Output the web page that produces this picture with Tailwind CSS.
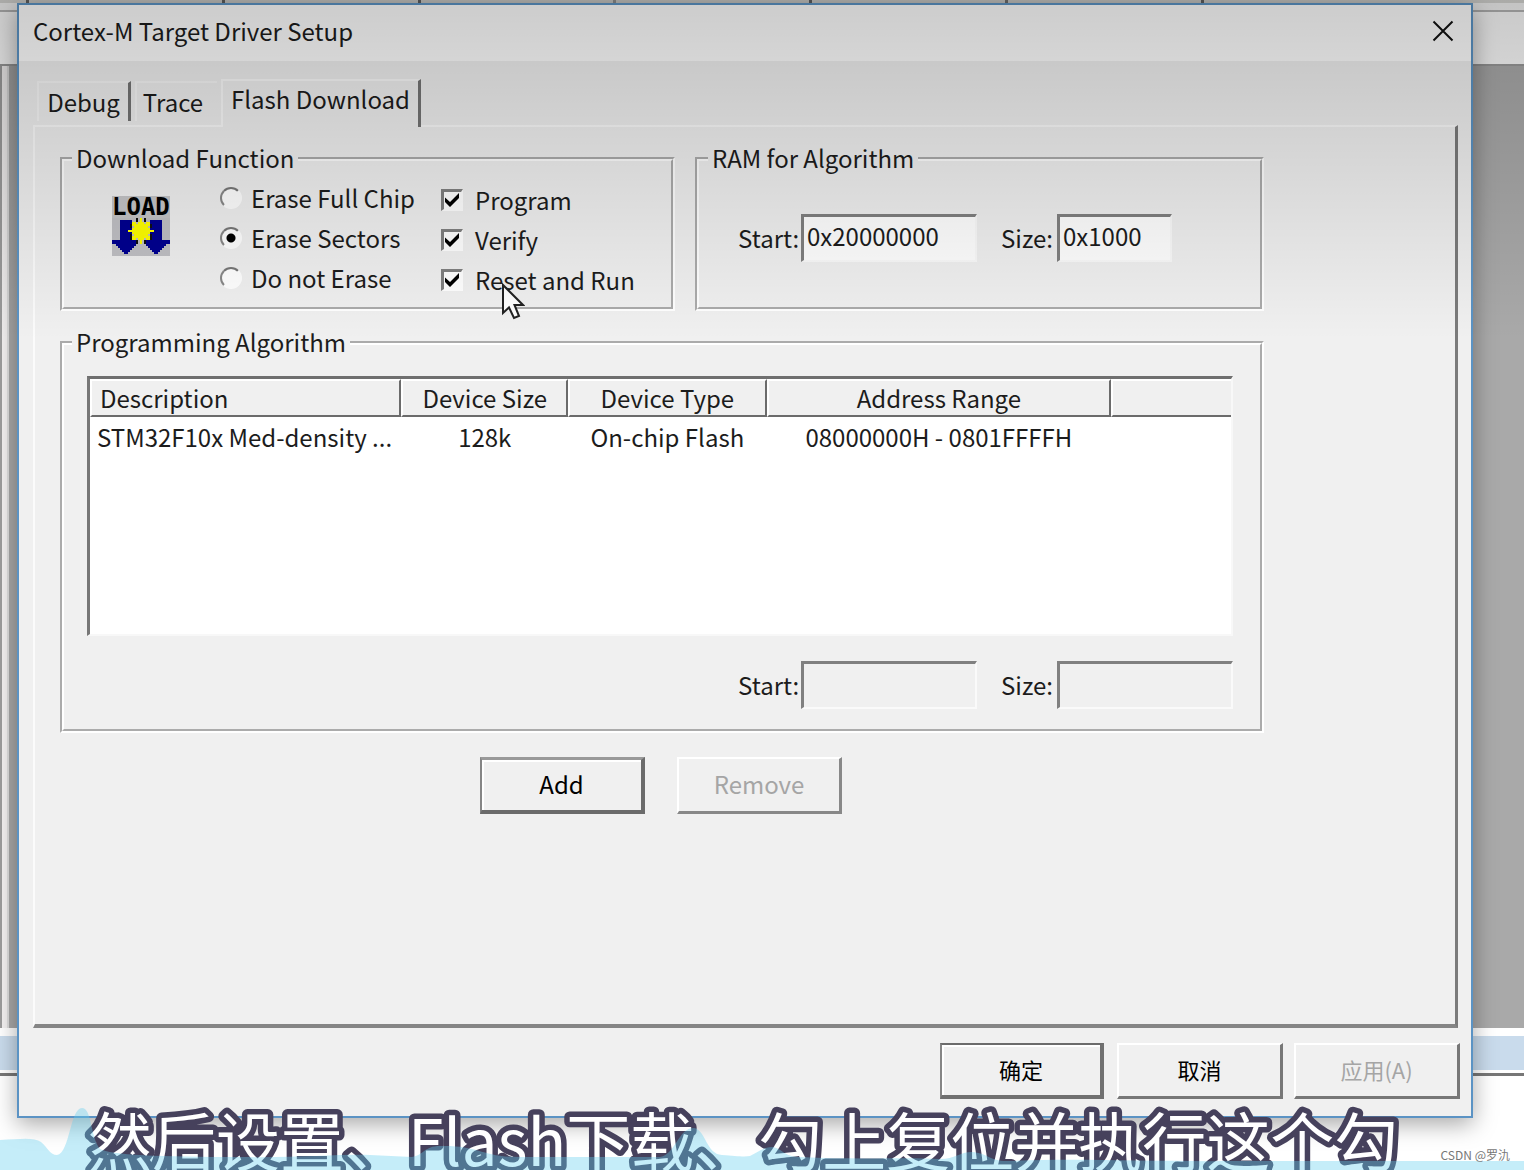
<!DOCTYPE html>
<html lang="zh-CN">
<head>
<meta charset="utf-8">
<meta name="viewport" content="width=device-width, initial-scale=1">
<title>Cortex-M Target Driver Setup</title>
<script src="https://cdn.jsdelivr.net/npm/@tailwindcss/browser@4"></script>
</head>
<body class="relative min-h-screen overflow-hidden bg-white pt-[3px] pr-[51px] pb-[52px] pl-[17px] font-['Noto_Sans_CJK_SC',sans-serif] text-2xl leading-8 text-[#1c1c1c]">

  <!-- Application window behind the dialog -->
  <div class="absolute inset-0 flex flex-col" aria-hidden="true">
    <div class="h-3 border-b-2 border-[#b5b5b5] bg-[#f4f4f4]"></div>
    <div class="h-[52px] bg-[#fbfbfb]"></div>
    <div class="flex flex-1 border-t-2 border-[#999] bg-[#a9a9a9]">
      <div class="w-[9px] border-x-2 border-l-[#9c9c9c] border-r-[#ddd] bg-[#f3f1f1]"></div>
    </div>
    <div class="h-2 bg-white"></div>
    <div class="h-[34px] bg-[#c9dbec]"></div>
    <div class="h-[3px] bg-white"></div>
    <div class="h-[3px] bg-[#777]"></div>
    <div class="h-[94px] bg-white"></div>
  </div>
  <div class="absolute inset-x-0 top-0 flex h-[3px] justify-between bg-[#d5d5d2] pr-80 pl-[26px]" aria-hidden="true">
    <span class="w-[3px] bg-[#666]"></span><span class="w-[3px] bg-[#666]"></span><span class="w-[3px] bg-[#666]"></span><span class="w-[3px] bg-[#999]"></span><span class="w-[3px] bg-[#666]"></span><span class="w-[3px] bg-[#777]"></span><span class="w-[3px] bg-[#666]"></span>
  </div>

  <main class="relative flex min-h-[calc(100vh-55px)] flex-col border-2 border-[#5b93c4] bg-[#f0f0f0] shadow-[0_6px_22px_rgba(0,0,0,0.35)]">
    <header class="flex h-14 items-center justify-between bg-white pr-[17px] pb-1 pl-[14px]">
      <h1>Cortex-M Target Driver Setup</h1>
      <button type="button" aria-label="Close">
        <svg class="size-[22px]" viewBox="0 0 22 22" fill="none" stroke="#111" stroke-width="2"><path d="M1.5 1.5 20.5 20.5M20.5 1.5 1.5 20.5"/></svg>
      </button>
    </header>

    <div class="flex flex-1 flex-col pt-[18px] pr-[13px] pb-[17px] pl-[14px]">
      <div class="flex items-end pl-1" role="tablist">
        <button type="button" role="tab" class="mr-1 mb-1 h-10 w-[94px] border-t-2 border-r-3 border-l-2 border-t-[#f8f8f8] border-r-[#747474] border-l-[#f8f8f8]">Debug</button>
        <button type="button" role="tab" class="mr-1 mb-1 h-10 w-[82px] border-t-2 border-l-2 border-[#f8f8f8] pr-2">Trace</button>
        <button type="button" role="tab" aria-selected="true" class="relative z-10 -mb-0.5 h-12 w-[200px] border-t-2 border-r-3 border-l-2 border-t-[#fbfbfb] border-r-[#747474] border-l-[#fbfbfb] bg-[#f0f0f0] pb-2.5">Flash Download</button>
      </div>

      <section role="tabpanel" class="flex flex-1 flex-col border-t-2 border-r-3 border-b-4 border-l-2 border-t-[#fbfbfb] border-r-[#7b7b7b] border-b-[#858585] border-l-[#fbfbfb] pt-4 pl-[25px]">
        <div class="grid w-full max-w-[1204px] grid-cols-[615fr_569fr] gap-x-5 gap-y-4">

          <fieldset class="h-[168px] min-w-0 border-4 border-white [border-style:groove]">
            <legend class="ml-2 px-1 pb-0.5 leading-[30px]">Download Function</legend>
            <div class="flex pt-[3px] pl-12">
              <div class="mt-[18px] w-[58px]">
                <div class="bg-[#c4c4c6] font-['DejaVu_Sans_Mono',monospace] text-2xl leading-[22px] font-bold text-black">LOAD</div>
                <svg class="h-[38px] w-[58px] bg-[#c0c0c4]" viewBox="0 0 29 19" shape-rendering="crispEdges" aria-hidden="true">
                  <path fill="#000090" d="M4 1h6v10h3v2h-1v1h-1v1h-1v1h-1v1H8v1H6v-1H5v-1H4v-1H3v-1H2v-1H0v-2h4zM19 1h6v10h4v2h-2v1h-1v1h-1v1h-1v1h-1v1h-2v-1h-1v-1h-1v-1h-1v-1h-1v-1h-1v-2h3z"/>
                  <path fill="#111" d="M9 3h1v2H9zM19 3h1v2h-1zM12 0h1v2h-1zM16 0h1v2h-1zM9 8h1v3H9zM19 8h1v3h-1zM12 11h1v2h-1zM16 11h1v2h-1z"/>
                  <path fill="#ff0" d="M14 0h1v2h1v1h1V2h2v2h-1v1h1v1h2v1h-2v1h-1v1h1v2h-2v-1h-1v1h-1v2h-1v-2h-1v-1h-1v1h-2V9h1V8h-1V7H8V6h2V5h1V4h-1V2h2v1h1V2h1z"/>
                </svg>
              </div>
              <div class="ml-[50px] w-[221px]">
                <label class="flex h-10 items-center gap-[9px]"><input type="radio" name="erase" class="size-[22px] appearance-none rounded-full border-2 border-t-[#777] border-r-white border-b-white border-l-[#888] bg-white checked:bg-[radial-gradient(circle,#000_4px,#fff_5px)]">Erase Full Chip</label>
                <label class="flex h-10 items-center gap-[9px]"><input type="radio" name="erase" checked class="size-[22px] appearance-none rounded-full border-2 border-t-[#777] border-r-white border-b-white border-l-[#888] bg-white checked:bg-[radial-gradient(circle,#000_4px,#fff_5px)]">Erase Sectors</label>
                <label class="flex h-10 items-center gap-[9px]"><input type="radio" name="erase" class="size-[22px] appearance-none rounded-full border-2 border-t-[#777] border-r-white border-b-white border-l-[#888] bg-white checked:bg-[radial-gradient(circle,#000_4px,#fff_5px)]">Do not Erase</label>
              </div>
              <div class="pt-0.5">
                <label class="flex h-10 items-center gap-3"><span class="grid place-items-center"><input type="checkbox" checked class="peer size-[22px] appearance-none border-t-3 border-r-2 border-b-2 border-l-3 border-t-[#808080] border-r-white border-b-white border-l-[#808080] bg-white [grid-area:1/1]"><svg class="invisible size-[14px] peer-checked:visible [grid-area:1/1]" viewBox="0 0 14 14"><path d="M0 4.500 5 9 14 0V5L5 14 0 9z"/></svg></span>Program</label>
                <label class="flex h-10 items-center gap-3"><span class="grid place-items-center"><input type="checkbox" checked class="peer size-[22px] appearance-none border-t-3 border-r-2 border-b-2 border-l-3 border-t-[#808080] border-r-white border-b-white border-l-[#808080] bg-white [grid-area:1/1]"><svg class="invisible size-[14px] peer-checked:visible [grid-area:1/1]" viewBox="0 0 14 14"><path d="M0 4.500 5 9 14 0V5L5 14 0 9z"/></svg></span>Verify</label>
                <label class="relative flex h-10 items-center gap-3"><span class="grid place-items-center"><input type="checkbox" checked class="peer size-[22px] appearance-none border-t-3 border-r-2 border-b-2 border-l-3 border-t-[#808080] border-r-white border-b-white border-l-[#808080] bg-white [grid-area:1/1]"><svg class="invisible size-[14px] peer-checked:visible [grid-area:1/1]" viewBox="0 0 14 14"><path d="M0 4.500 5 9 14 0V5L5 14 0 9z"/></svg></span>Reset and Run
                  <svg class="absolute top-[22px] left-[60px] h-[38px] w-6" viewBox="0 0 24 38" fill="#fff" stroke="#222" stroke-width="2" aria-hidden="true"><path d="M2 3V31L8 25.500 13 36 18 34 13.500 23H22z"/></svg>
                </label>
              </div>
            </div>
          </fieldset>

          <fieldset class="h-[168px] min-w-0 border-4 border-white [border-style:groove]">
            <legend class="ml-[9px] px-1 pb-0.5 leading-[30px]">RAM for Algorithm</legend>
            <div class="flex items-center pt-[39px] pl-[39px]">
              <label for="ram-start" class="w-[63px]">Start:</label>
              <input id="ram-start" value="0x20000000" class="h-12 w-[176px] border-t-3 border-r-2 border-b-2 border-l-3 border-t-[#808080] border-r-[#fafafa] border-b-[#fafafa] border-l-[#808080] bg-white pb-1.5 pl-[3px]">
              <label for="ram-size" class="ml-6 w-14">Size:</label>
              <input id="ram-size" value="0x1000" class="h-12 w-[115px] border-t-3 border-r-2 border-b-2 border-l-3 border-t-[#808080] border-r-[#fafafa] border-b-[#fafafa] border-l-[#808080] bg-white pb-1.5 pl-[3px]">
            </div>
          </fieldset>

          <fieldset class="col-span-2 min-w-0 border-4 border-white pr-[27px] pb-5 pl-[23px] [border-style:groove]">
            <legend class="-ml-[15px] px-1 pb-0.5 leading-[30px]">Programming Algorithm</legend>
            <div class="mt-[17px] h-[260px] border-t-3 border-r-2 border-b-2 border-l-3 border-t-[#6f6f6f] border-r-[#f8f8f8] border-b-[#f8f8f8] border-l-[#777] bg-white">
              <table class="w-full table-fixed border-separate border-spacing-0">
                <colgroup><col class="w-[27.3%]"><col class="w-[14.6%]"><col class="w-[17.4%]"><col class="w-[30.2%]"><col></colgroup>
                <thead>
                  <tr class="h-[38px] bg-[#f0f0f0]">
                    <th class="border-t-2 border-r-2 border-b-2 border-l-2 border-t-white border-r-[#6b6b6b] border-b-[#6b6b6b] border-l-white p-0 pl-2 text-left font-normal">Description</th>
                    <th class="border-t-2 border-r-2 border-b-2 border-l-2 border-t-white border-r-[#6b6b6b] border-b-[#6b6b6b] border-l-white p-0 font-normal">Device Size</th>
                    <th class="border-t-2 border-r-2 border-b-2 border-l-2 border-t-white border-r-[#6b6b6b] border-b-[#6b6b6b] border-l-white p-0 font-normal">Device Type</th>
                    <th class="border-t-2 border-r-2 border-b-2 border-l-2 border-t-white border-r-[#6b6b6b] border-b-[#6b6b6b] border-l-white p-0 font-normal">Address Range</th>
                    <th class="border-t-2 border-b-2 border-l-2 border-t-white border-b-[#6b6b6b] border-l-white p-0"></th>
                  </tr>
                </thead>
                <tbody>
                  <tr class="h-10 text-center whitespace-nowrap">
                    <td class="p-0 pl-[7px] text-left">STM32F10x Med-density ...</td>
                    <td class="p-0">128k</td>
                    <td class="p-0">On-chip Flash</td>
                    <td class="p-0">08000000H - 0801FFFFH</td>
                    <td class="p-0"></td>
                  </tr>
                </tbody>
              </table>
            </div>
            <div class="mt-[25px] flex items-center justify-end">
              <label for="alg-start" class="w-[63px]">Start:</label>
              <input id="alg-start" readonly class="h-12 w-[176px] border-t-3 border-r-2 border-b-2 border-l-3 border-t-[#808080] border-r-[#fafafa] border-b-[#fafafa] border-l-[#808080] pl-[3px]">
              <label for="alg-size" class="ml-6 w-14">Size:</label>
              <input id="alg-size" readonly class="h-12 w-[176px] border-t-3 border-r-2 border-b-2 border-l-3 border-t-[#808080] border-r-[#fafafa] border-b-[#fafafa] border-l-[#808080] pl-[3px]">
            </div>
          </fieldset>

          <div class="col-span-2 flex justify-center gap-8 pt-2 pr-0.5">
            <button type="button" class="h-[57px] w-[165px] border-t-3 border-r-4 border-b-4 border-l-2 border-t-[#999] border-r-[#6b6b6b] border-b-[#6b6b6b] border-l-[#858585] pb-0.5 text-black shadow-[inset_2px_2px_0_#fff]">Add</button>
            <button type="button" disabled class="h-[57px] w-[165px] border-t-2 border-r-3 border-b-3 border-l-2 border-t-white border-r-[#888] border-b-[#888] border-l-white pb-0.5 text-[#a5a5a5]">Remove</button>
          </div>
        </div>
      </section>

      <footer class="mt-[15px] flex justify-end">
        <button type="button" class="h-14 w-[164px] border-t-2 border-r-4 border-b-4 border-l-2 border-t-[#6b6b6b] border-r-[#707070] border-b-[#707070] border-l-[#858585] pb-0.5 text-[22px] text-black shadow-[inset_2px_2px_0_#fff]">确定</button>
        <button type="button" class="ml-[13px] h-14 w-[166px] border-t-2 border-r-3 border-b-3 border-l-2 border-t-white border-r-[#777] border-b-[#777] border-l-white pb-1 text-[22px] text-black">取消</button>
        <button type="button" disabled class="-mr-0.5 ml-[11px] h-14 w-[166px] border-t-2 border-r-3 border-b-3 border-l-2 border-t-white border-r-[#777] border-b-[#777] border-l-white pb-1 text-[22px] text-[#a5a5a5]">应用(A)</button>
      </footer>
    </div>
  </main>

  <!-- Shade falling from the top edge of the video frame -->
  <div class="pointer-events-none absolute inset-x-0 top-0 z-20 h-[340px] bg-linear-to-b from-black/20 to-black/0"></div>

  <!-- Subtitle, progress wave and watermark -->
  <svg class="pointer-events-none absolute inset-x-0 bottom-0 z-20 h-[72px] w-full overflow-visible">
    <text x="88" y="68" font-size="64" fill="#fff" stroke="#46415c" stroke-width="11" stroke-linejoin="round" paint-order="stroke">然后设置、Flash下载、勾上复位并执行这个勾</text>
  </svg>
  <svg class="pointer-events-none absolute inset-x-0 bottom-0 z-20 h-[70px] w-full" viewBox="0 0 1524 70" preserveAspectRatio="none" aria-hidden="true">
    <path fill="#61cdee" fill-opacity=".37" d="M0 40C20 39 34 37 41 42C48 48 50 55 57 55C70 53 70 8 82 8C92 8 90 36 100 49C110 55 160 57 240 57C300 58 340 54 370 55L412 57C424 55 424 46 440 46C480 45 480 57 520 57H660C676 54 678 28 694 28C706 30 706 54 722 55C736 56 744 57 750 56C760 51 764 47 772 47C782 48 784 57 800 57C860 60 910 57 940 59C955 59 960 52 972 52C988 53 990 62 1010 61C1080 58 1150 62 1240 61H1524V70H0z"/>
  </svg>
  <p class="absolute right-[14px] bottom-[5px] z-20 text-xs leading-5 text-[#777]">CSDN @罗氿</p>
</body>
</html>
